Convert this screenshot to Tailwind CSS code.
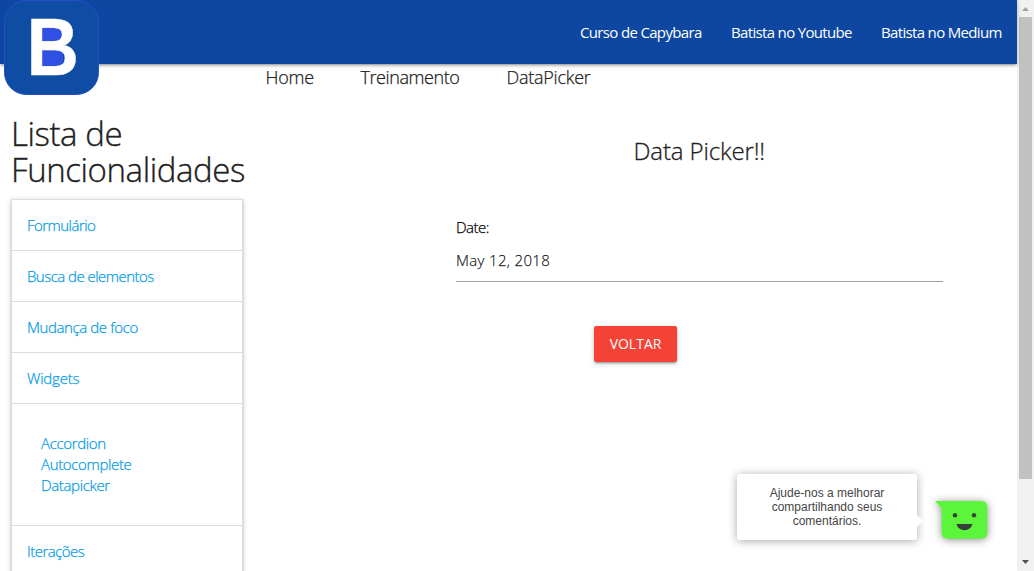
<!DOCTYPE html>
<html lang="pt-BR">
<head>
<meta charset="utf-8">
<title>Data Picker</title>
<script src="https://cdn.jsdelivr.net/npm/@tailwindcss/browser@4"></script>
</head>
<body class="flex h-[571px] w-[1034px] overflow-hidden bg-white font-['Open_Sans','Noto_Sans',sans-serif] text-[#212121]">
<div class="relative flex min-w-0 flex-1 flex-col">
  <nav class="flex h-16 shrink-0 justify-end gap-[29px] bg-[#0d47a1] pr-[15px] text-[15px] leading-[65px] tracking-[-0.66px] whitespace-nowrap text-white shadow-[0_2px_2px_0_rgba(0,0,0,0.14),0_3px_1px_-2px_rgba(0,0,0,0.12),0_1px_5px_0_rgba(0,0,0,0.2)]">
    <a class="w-[122px]">Curso de Capybara</a>
    <a class="w-[121px]">Batista no Youtube</a>
    <a class="w-[121px]">Batista no Medium</a>
  </nav>
  <svg class="absolute top-0 left-1" width="96" height="96" viewBox="0 0 96 96">
    <rect x=".5" y=".5" width="94" height="94" rx="22" fill="#0f4da4" stroke="#2450cb"/>
    <rect x="36" y="26" width="23" height="42" fill="#3050e4"/>
    <text x="22.700" y="75.300" font-family="Liberation Sans, Arial, sans-serif" font-size="81" font-weight="700" textLength="52" lengthAdjust="spacingAndGlyphs" fill="#fff" stroke="#fff" stroke-width=".5">B</text>
  </svg>
  <main class="flex min-h-0 flex-1">
    <aside class="w-[254px] shrink-0 pt-[52px] pl-[11px]">
      <h1 class="h-[83px] text-[33px] leading-9 font-light tracking-[-0.42px] whitespace-nowrap [-webkit-text-stroke:0.35px]">Lista de<br>Funcionalidades</h1>
      <div class="w-[232px] border border-[#ddd] text-[15px] font-light tracking-[-0.53px] text-[#039be5] shadow-[0_2px_2px_0_rgba(0,0,0,0.14),0_3px_1px_-2px_rgba(0,0,0,0.12),0_1px_5px_0_rgba(0,0,0,0.2)] [-webkit-text-stroke:0.25px]">
        <div class="h-[51px] border-b border-[#ddd] pl-[15px] leading-[51px]">Formulário</div>
        <div class="h-[51px] border-b border-[#ddd] pl-[15px] leading-[51px]">Busca de elementos</div>
        <div class="h-[51px] border-b border-[#ddd] pl-[15px] leading-[51px] tracking-[-0.4px]">Mudança de foco</div>
        <div class="h-[51px] border-b border-[#ddd] pl-[15px] leading-[51px] tracking-[-0.2px]">Widgets</div>
        <div class="h-[122px] border-b border-[#ddd] pt-[29px] pl-[29px] leading-[21px] tracking-[-0.35px]">Accordion<br>Autocomplete<br>Datapicker</div>
        <div class="h-[51px] border-b border-[#ddd] pl-[15px] leading-[51px]">Iterações</div>
      </div>
    </aside>
    <section class="flex flex-1 flex-col">
      <div class="flex h-[60px] pl-[11.5px] text-[18px] leading-[27px] font-light tracking-[-0.25px] [-webkit-text-stroke:0.25px]">
        <a class="w-[95px]">Home</a><a class="w-[146px] tracking-[-0.42px]">Treinamento</a><a>DataPicker</a>
      </div>
      <h2 class="h-[92px] pl-[379.5px] text-[24px] leading-[54px] font-light tracking-[-0.13px] [-webkit-text-stroke:0.3px]">Data Picker!!</h2>
      <div class="ml-[202px] h-[66px] w-[487px] border-b border-[#9e9e9e] text-[15px] font-light [-webkit-text-stroke:0.25px]">
        <label class="block h-[33px] leading-[23px] tracking-[-0.5px] text-black">Date:</label>
        <div class="leading-[23px] tracking-[0.33px] text-black/87">May 12, 2018</div>
      </div>
      <button class="mt-11 ml-[340px] h-9 w-[83px] rounded-[2px] bg-[#f44336] text-[14px] tracking-[0px] text-white shadow-[0_2px_2px_0_rgba(0,0,0,0.14),0_3px_1px_-2px_rgba(0,0,0,0.12),0_1px_5px_0_rgba(0,0,0,0.2)]"><span class="block pb-px">VOLTAR</span></button>
    </section>
  </main>
  <div class="absolute top-[474px] left-[737px] h-[66px] w-[180px] rounded-[3px] bg-white pt-[12px] text-center font-['Liberation_Sans',Arial,sans-serif] text-[12px] leading-[14px] text-[#444] shadow-[0_1px_10px_rgba(0,0,0,0.35)]">Ajude-nos a melhorar<br>compartilhando seus<br>comentários.
    <svg class="absolute top-[41px] left-[180px]" width="6" height="12"><path d="M0 0L6 6L0 12Z" fill="#fff"/></svg>
  </div>
  <svg class="absolute top-[501px] left-[935px] overflow-visible drop-shadow-[0_1px_4px_rgba(0,0,0,0.45)]" width="53" height="38" viewBox="0 0 53 38">
    <path d="M0 0H46Q52.300 0 52.300 6V31.500Q52.300 37.700 46 37.700H13Q6.700 37.700 6.700 31.500V7.500Z" fill="#5bf53c"/>
    <circle cx="20" cy="14.300" r="2.200" fill="#3b3f3a"/><circle cx="39" cy="14.300" r="2.200" fill="#3b3f3a"/>
    <path d="M21.500 23H37.300C36 31.200 23 31.200 21.500 23Z" fill="#3b3f3a"/>
  </svg>
</div>
<div class="flex w-[17px] shrink-0 flex-col items-center bg-[#f1f1f1]">
  <svg class="shrink-0" width="17" height="17"><path d="M5 11L8.500 7L12 11Z" fill="#a3a3a3"/></svg>
  <div class="h-[462px] w-[13px] bg-[#c1c1c1]"></div>
  <svg class="mt-auto shrink-0" width="17" height="17"><path d="M5 6L8.500 10L12 6Z" fill="#505050"/></svg>
</div>
</body>
</html>
